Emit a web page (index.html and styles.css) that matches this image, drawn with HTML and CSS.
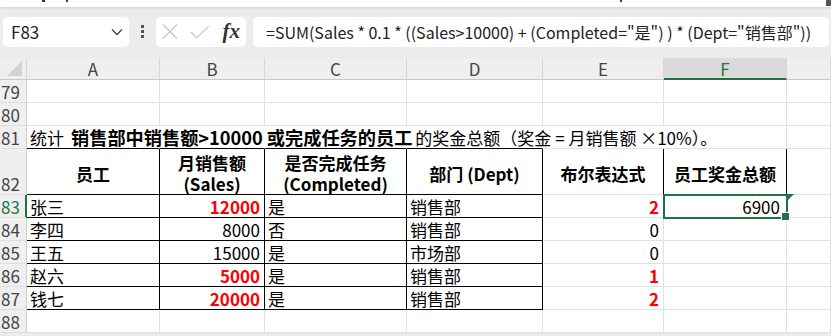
FILE: index.html
```html
<!DOCTYPE html>
<html lang="zh-CN">
<head>
  <meta charset="utf-8">
  <title>奖金总额</title>
  <link rel="stylesheet" href="styles.css">
</head>
<body>
  <div class="ribbon-edge">
    <i class="mk mk1"></i>
    <i class="mk mk2"></i>
    <i class="mk mk3"></i>
    <i class="mk mk4"></i>
  </div>

  <div class="formula-bar">
    <div class="namebox">
      <span>F83</span>
      <svg width="12" height="8" viewBox="0 0 12 8"><path d="M1 1.5 L6 6.5 L11 1.5" fill="none" stroke="#444" stroke-width="1.3"/></svg>
    </div>
    <div class="grip"><i></i><i></i><i></i></div>
    <div class="fxbox">
      <svg width="17" height="17" viewBox="0 0 17 17"><path d="M1 1 L16 16 M16 1 L1 16" stroke="#c4c4c4" stroke-width="1.3" fill="none"/></svg>
      <svg width="21" height="14" viewBox="0 0 21 14"><path d="M1 7 L7 13 L20 1" stroke="#c4c4c4" stroke-width="1.3" fill="none"/></svg>
      <span class="fx">fx</span>
    </div>
    <div class="formula">=SUM(Sales * 0.1 * ((Sales&gt;10000) + (Completed="是") ) * (Dept="销售部"))</div>
  </div>

  <div class="sheet">
    <div class="corner"><span></span></div>
    <div class="colhead">A</div>
    <div class="colhead">B</div>
    <div class="colhead">C</div>
    <div class="colhead">D</div>
    <div class="colhead">E</div>
    <div class="colhead on">F</div>
    <div class="colhead"></div>

    <div class="rowhead">79</div>
    <div class="c"></div><div class="c"></div><div class="c"></div><div class="c"></div><div class="c"></div><div class="c"></div><div class="c"></div>

    <div class="rowhead">80</div>
    <div class="c"></div><div class="c"></div><div class="c"></div><div class="c"></div><div class="c"></div><div class="c"></div><div class="c"></div>

    <div class="rowhead">81</div>
    <div class="c nr bb title">统计<b>销售部中销售额&gt;10000 或完成任务的员工</b>的奖金总额（奖金 = 月销售额 ×10%）。</div>
    <div class="c nr bb"></div>
    <div class="c nr bb"></div>
    <div class="c nr bb"></div>
    <div class="c nr"></div>
    <div class="c"></div>
    <div class="c"></div>

    <div class="rowhead">82</div>
    <div class="c b hd">员工</div>
    <div class="c b hd">月销售额<br>(Sales)</div>
    <div class="c b hd">是否完成任务<br>(Completed)</div>
    <div class="c b hd">部门 (Dept)</div>
    <div class="c br hd">布尔表达式</div>
    <div class="c br hd">员工奖金总额</div>
    <div class="c"></div>

    <div class="rowhead cur">83</div>
    <div class="c b">张三</div>
    <div class="c b num red">12000</div>
    <div class="c b">是</div>
    <div class="c b">销售部</div>
    <div class="c num red">2</div>
    <div class="c num sel">6900</div>
    <div class="c"></div>

    <div class="rowhead">84</div>
    <div class="c b">李四</div>
    <div class="c b num">8000</div>
    <div class="c b">否</div>
    <div class="c b">销售部</div>
    <div class="c num">0</div>
    <div class="c"></div>
    <div class="c"></div>

    <div class="rowhead">85</div>
    <div class="c b">王五</div>
    <div class="c b num">15000</div>
    <div class="c b">是</div>
    <div class="c b">市场部</div>
    <div class="c num">0</div>
    <div class="c"></div>
    <div class="c"></div>

    <div class="rowhead">86</div>
    <div class="c b">赵六</div>
    <div class="c b num red">5000</div>
    <div class="c b">是</div>
    <div class="c b">销售部</div>
    <div class="c num red">1</div>
    <div class="c"></div>
    <div class="c"></div>

    <div class="rowhead">87</div>
    <div class="c b">钱七</div>
    <div class="c b num red">20000</div>
    <div class="c b">是</div>
    <div class="c b">销售部</div>
    <div class="c num red">2</div>
    <div class="c"></div>
    <div class="c"></div>

    <div class="rowhead">88</div>
    <div class="c"></div><div class="c"></div><div class="c"></div><div class="c"></div><div class="c"></div><div class="c"></div><div class="c"></div>
  </div>
</body>
</html>
```

FILE: styles.css
```css
* {
  box-sizing: border-box;
}

body {
  margin: 0;
  height: 336px;
  overflow: hidden;
  background: #ececec;
  font-family: "Noto Sans CJK SC", "Liberation Sans", sans-serif;
  color: #000;
}

/* bottom edge of the ribbon */
.ribbon-edge {
  position: relative;
  height: 7px;
  background: #fff;
  box-shadow: 0 1px 3px rgba(0, 0, 0, 0.12);
}

.mk {
  position: absolute;
  top: 0;
  height: 2px;
  background: #333;
}

.mk1 { left: 42px; width: 3px; }
.mk2 { left: 66px; width: 2px; }
.mk3 { left: 620px; width: 2px; }
.mk4 { left: 826px; width: 5px; height: 6px; background: #555; }

/* formula bar */
.formula-bar {
  display: flex;
  align-items: center;
  height: 51px;
  padding: 0 2px 2px 3px;
}

.namebox,
.fxbox,
.formula {
  height: 30px;
  background: #fff;
  border-radius: 5px;
}

.namebox {
  width: 126px;
  display: flex;
  align-items: center;
  justify-content: space-between;
  padding: 0 6px 0 8px;
  font-size: 17px;
  color: #222;
}

.grip {
  width: 27px;
  display: flex;
  flex-direction: column;
  align-items: center;
  gap: 2px;
}

.grip i {
  width: 3px;
  height: 3px;
  background: #555;
}

.fxbox {
  width: 90px;
  display: flex;
  align-items: center;
  padding: 0 6px 0 6px;
  gap: 12px;
}

.fx {
  font-family: "Liberation Serif", "DejaVu Serif", serif;
  font-style: italic;
  font-weight: bold;
  font-size: 21px;
  color: #333;
  margin-left: 1px;
}

.formula {
  flex: 1;
  margin-left: 7px;
  padding-left: 13px;
  font-size: 16px;
  line-height: 30px;
  color: #222;
  white-space: nowrap;
  overflow: hidden;
}

/* grid */
.sheet {
  display: grid;
  grid-template-columns: 27px 133px 105px 142px 136px 121px 123px 1fr;
  grid-template-rows: 22px 23px 23px 23px 46px repeat(6, 23px);
  background: #fff;
  font-size: 17px;
}

.corner {
  background: #efefef;
  border-right: 1px solid #d4d4d4;
  border-bottom: 1px solid #c8c8c8;
  position: relative;
}

.corner span {
  position: absolute;
  right: 4px;
  bottom: 3px;
  border-bottom: 15px solid #d3d3d3;
  border-left: 15px solid transparent;
}

.colhead {
  background: #efefef;
  border-right: 1px solid #d8d8d8;
  border-bottom: 1px solid #c8c8c8;
  color: #444;
  text-align: center;
  line-height: 21px;
}

.colhead.on {
  background: #dadada;
  color: #1e6f42;
  border-bottom: 2px solid #217346;
}

.rowhead {
  background: #efefef;
  border-right: 1px solid #d0d0d0;
  border-bottom: 1px solid #dedede;
  color: #444;
  padding-left: 1px;
  display: flex;
  align-items: flex-end;
  line-height: 21px;
}

.rowhead.cur {
  color: #217346;
  border-right: 2px solid #217346;
}

.c {
  border-right: 1px solid #e1e1e1;
  border-bottom: 1px solid #e1e1e1;
  padding: 0 3px;
  display: flex;
  align-items: flex-end;
  white-space: nowrap;
  line-height: 21px;
}

.b {
  border-right-color: #000;
  border-bottom-color: #000;
}

.br {
  border-right-color: #000;
}

.bb {
  border-bottom-color: #000;
}

.nr {
  border-right-color: transparent;
}

.num {
  justify-content: flex-end;
  padding-right: 4px;
}

.red {
  color: #f00;
  font-weight: bold;
}

.hd {
  align-items: center;
  justify-content: center;
  text-align: center;
  font-weight: bold;
  white-space: normal;
  line-height: 21px;
  padding-top: 3px;
}

.title {
  display: block;
  padding-top: 1px;
}

.title b {
  font-size: 18.2px;
  padding: 0 3px 0 7px;
}

/* active cell */
.sel {
  position: relative;
  z-index: 1;
  outline: 2px solid #217346;
  outline-offset: -1px;
  padding-right: 6px;
}

.sel::after {
  content: "";
  position: absolute;
  right: -4px;
  bottom: -4px;
  width: 7px;
  height: 7px;
  background: #217346;
  border: 1px solid #fff;
}

.sel::before {
  content: "";
  position: absolute;
  left: calc(100% + 1px);
  top: -1px;
  border-top: 7px solid #217346;
  border-right: 7px solid transparent;
}
```
